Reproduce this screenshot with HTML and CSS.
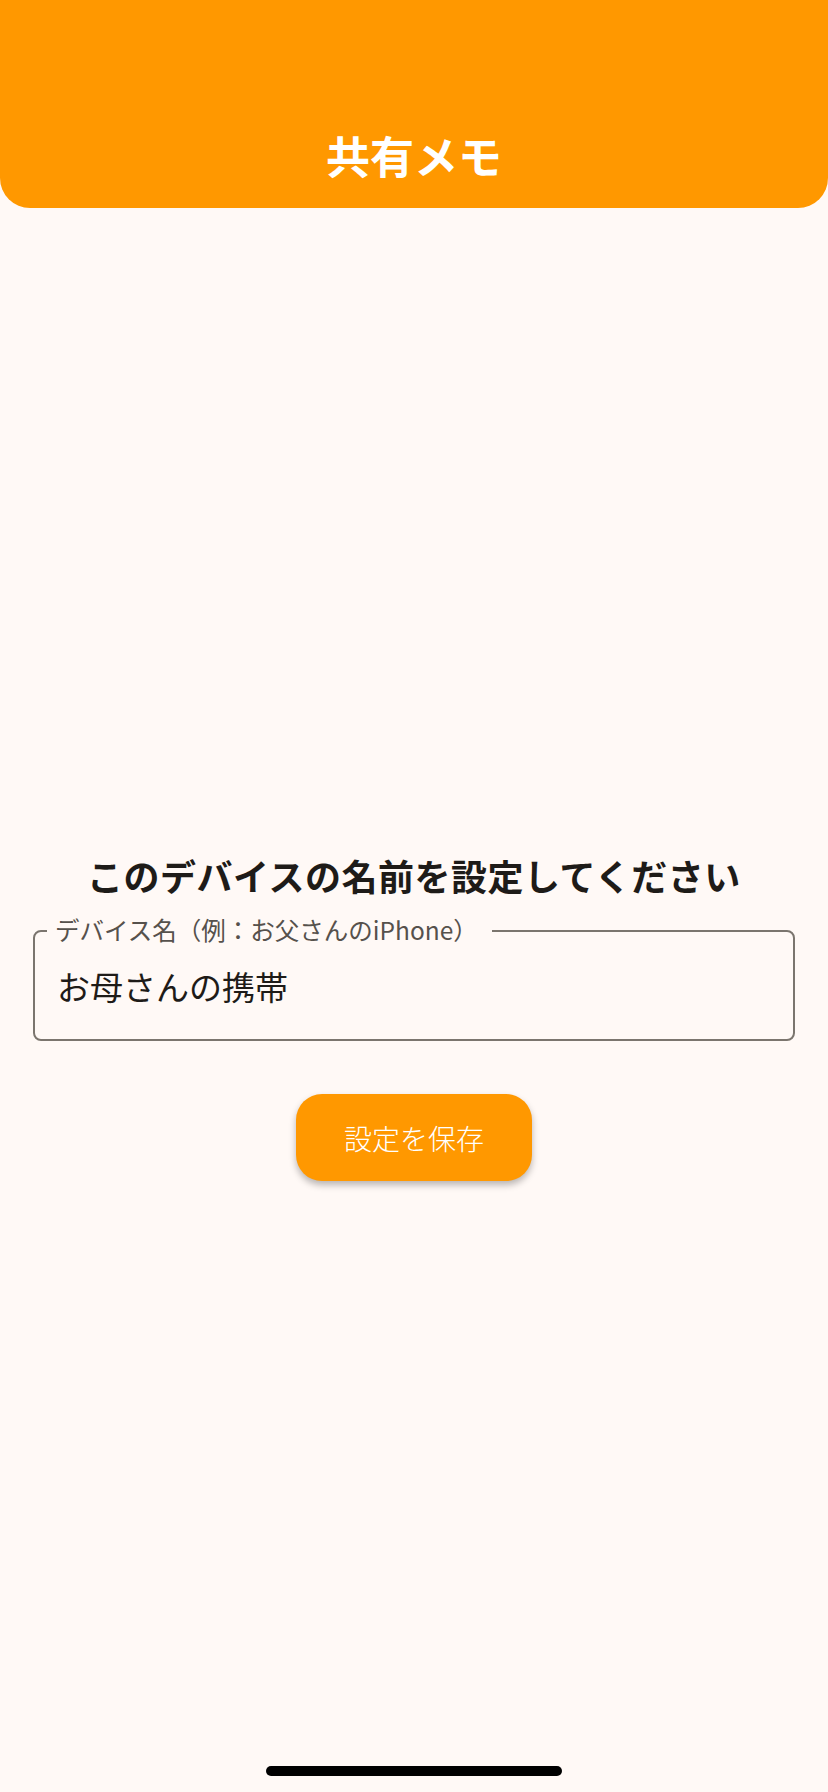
FILE: index.html
```html
<!DOCTYPE html>
<html lang="ja">
  <head>
    <meta charset="UTF-8" />
    <meta name="viewport" content="width=device-width, initial-scale=1.0" />
    <title>共有メモ</title>
    <link rel="stylesheet" href="styles.css">
  </head>

  <body>
    <!-- ヘッダー -->
    <header class="app-bar">
      <h1 class="app-title">共有メモ</h1>
    </header>

    <!-- デバイス名の設定 -->
    <main class="setup">
      <h2 class="setup-title">このデバイスの名前を設定してください</h2>

      <div class="field">
        <label class="field-label" for="device-name">デバイス名（例：お父さんのiPhone）</label>
        <input class="field-input" id="device-name" type="text" value="お母さんの携帯" />
      </div>

      <button class="save-btn" type="button">設定を保存</button>
    </main>

    <div class="home-indicator"></div>
  </body>
</html>
```

FILE: styles.css
```css
* {
  margin: 0;
  padding: 0;
  box-sizing: border-box;
}

body {
  width: 828px;
  height: 1792px;
  position: relative;
  overflow: hidden;
  background-color: #fff9f6;
  font-family: "Noto Sans CJK JP", "Noto Sans", sans-serif;
  color: #1e1b18;
}

.app-bar {
  height: 208px;
  display: flex;
  align-items: flex-end;
  justify-content: center;
  padding-bottom: 23px;
  background-color: #ff9800;
  border-radius: 0 0 30px 30px;
}

.app-title {
  font-size: 44px;
  line-height: 60px;
  font-weight: 700;
  color: #fff;
}

.setup {
  display: flex;
  flex-direction: column;
  align-items: center;
  padding: 642px 33px 0;
}

.setup-title {
  font-size: 36px;
  line-height: 50px;
  font-weight: 700;
  letter-spacing: 0.5px;
  margin-bottom: 30px;
}

.field {
  position: relative;
  width: 100%;
}

.field-label {
  position: absolute;
  top: -16px;
  left: 14px;
  padding: 0 14px 0 8px;
  font-size: 24.5px;
  line-height: 32px;
  color: #56514c;
  background-color: #fff9f6;
}

.field-input {
  display: block;
  width: 100%;
  height: 111px;
  padding: 0 22px;
  font-family: inherit;
  font-size: 33px;
  color: #1e1b18;
  background: transparent;
  border: 2px solid #7b756e;
  border-radius: 8px;
  outline: none;
}

.save-btn {
  margin-top: 53px;
  width: 236px;
  height: 87px;
  font-family: inherit;
  font-size: 28px;
  font-weight: 300;
  color: #fff;
  background-color: #ff9800;
  border: none;
  border-radius: 26px;
  box-shadow: 0 4px 7px rgba(0, 0, 0, 0.28);
  cursor: pointer;
}

.home-indicator {
  position: absolute;
  left: 50%;
  bottom: 16px;
  width: 296px;
  height: 10px;
  transform: translateX(-50%);
  border-radius: 5px;
  background-color: #000;
}
```
